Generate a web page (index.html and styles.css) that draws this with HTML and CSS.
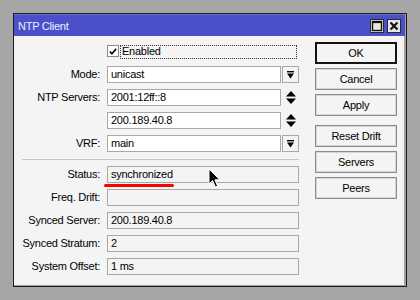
FILE: index.html
```html
<!DOCTYPE html>
<html lang="en">
<head>
  <meta charset="UTF-8">
  <title>NTP Client</title>
  <link rel="stylesheet" href="styles.css">
</head>
<body>
  <div class="window">
    <div class="titlebar">
      <span class="title">NTP Client</span>
      <div class="win-buttons">
        <span class="win-btn">
          <svg width="12" height="12" viewBox="0 0 12 12"><rect x="1.5" y="1.5" width="9" height="9" fill="none" stroke="#111" stroke-width="1.4"/><rect x="1.5" y="1.5" width="9" height="1.6" fill="#111"/></svg>
        </span>
        <span class="win-btn">
          <svg width="12" height="12" viewBox="0 0 12 12"><path d="M2.5 2.5 L9.5 9.5 M9.5 2.5 L2.5 9.5" stroke="#111" stroke-width="2.2"/></svg>
        </span>
      </div>
    </div>

    <div class="content">
      <div class="form">
        <span></span>
        <div class="check-row">
          <span class="checkbox">
            <svg width="11" height="11" viewBox="0 0 11 11"><path d="M2 5.5 L4.3 8 L9 2.5" fill="none" stroke="#000" stroke-width="1.8"/></svg>
          </span>
          <span class="check-label">Enabled</span>
        </div>

        <label>Mode:</label>
        <div class="field-row">
          <div class="field edit">unicast</div>
          <span class="drop-btn"><svg width="7" height="8" viewBox="0 0 7 8"><rect x="0" y="0" width="7" height="1.4" fill="#000"/><path d="M0 2.6 H7 L3.5 7.5 Z" fill="#000"/></svg></span>
        </div>

        <label>NTP Servers:</label>
        <div class="field-row">
          <div class="field edit">2001:12ff::8</div>
          <span class="spin"><svg width="10" height="13" viewBox="0 0 10 13"><path d="M5 0 L10 5.5 H0 Z M0 7.5 H10 L5 13 Z" fill="#000"/></svg></span>
        </div>

        <span></span>
        <div class="field-row">
          <div class="field edit">200.189.40.8</div>
          <span class="spin"><svg width="10" height="13" viewBox="0 0 10 13"><path d="M5 0 L10 5.5 H0 Z M0 7.5 H10 L5 13 Z" fill="#000"/></svg></span>
        </div>

        <label>VRF:</label>
        <div class="field-row">
          <div class="field edit">main</div>
          <span class="drop-btn"><svg width="7" height="8" viewBox="0 0 7 8"><rect x="0" y="0" width="7" height="1.4" fill="#000"/><path d="M0 2.6 H7 L3.5 7.5 Z" fill="#000"/></svg></span>
        </div>

        <div class="separator"></div>

        <label>Status:</label>
        <div class="field wide status">synchronized<span class="mark"></span></div>

        <label>Freq. Drift:</label>
        <div class="field wide"></div>

        <label>Synced Server:</label>
        <div class="field wide">200.189.40.8</div>

        <label>Synced Stratum:</label>
        <div class="field wide">2</div>

        <label>System Offset:</label>
        <div class="field wide">1 ms</div>
      </div>

      <div class="actions">
        <button class="btn default">OK</button>
        <button class="btn">Cancel</button>
        <button class="btn">Apply</button>
        <button class="btn spaced">Reset Drift</button>
        <button class="btn">Servers</button>
        <button class="btn">Peers</button>
      </div>
    </div>

    <!-- puntero del ratón sobre el campo Status -->
    <svg class="cursor" width="14" height="21" viewBox="0 0 14 21">
      <path d="M1 1 L1 16 L4.6 12.6 L7.4 19 L9.6 18 L6.9 11.8 L11.8 11.8 Z" fill="#000" stroke="#fff" stroke-width="1"/>
    </svg>
  </div>
</body>
</html>
```

FILE: styles.css
```css
body {
  margin: 0;
  padding: 13px 0 0 13px;
  background-color: #a6a6a6;
  font-family: "Liberation Sans", Arial, sans-serif;
  font-size: 11px;
  letter-spacing: -0.25px;
  color: #000;
}
.window {
  position: relative;
  width: 394px;
  height: 274px;
  box-sizing: border-box;
  border: 1px solid #1c1c1c;
  background-color: #f4f4f4;
  box-shadow: inset -2px -1px 0 #a0a0a0;
}
.titlebar {
  height: 22px;
  background-color: #4b4fc9;
  border-top: 1px solid #6a6ed8;
  box-sizing: border-box;
  display: flex;
  align-items: center;
  justify-content: space-between;
  padding: 0 4px 0 4px;
  margin-right: 1px;
}
.title {
  color: #eef0ff;
  font-size: 11px;
}
.win-buttons {
  display: flex;
  gap: 3px;
}
.win-btn {
  width: 14px;
  height: 14px;
  box-sizing: border-box;
  border: 1px solid #2a2a2a;
  background-color: #e6e6e6;
  display: flex;
  align-items: center;
  justify-content: center;
}
.content {
  display: flex;
  align-items: flex-start;
}
.form {
  display: grid;
  grid-template-columns: 86px 192px;
  column-gap: 7px;
  row-gap: 6px;
  padding-top: 9px;
  width: 286px;
}
.form label {
  text-align: right;
  line-height: 17px;
  white-space: nowrap;
}
.check-row {
  height: 15px;
  display: flex;
  align-items: flex-start;
}
.checkbox {
  width: 12px;
  height: 12px;
  box-sizing: border-box;
  border: 1px solid #8a8a8a;
  background-color: #fff;
  display: flex;
  align-items: center;
  justify-content: center;
}
.check-label {
  margin-left: 1px;
  height: 12px;
  line-height: 11px;
  flex: 1;
  border: 1px dotted #333;
  padding-left: 1px;
  margin-right: 2px;
}
.field-row {
  display: flex;
  gap: 1px;
}
.field {
  height: 17px;
  box-sizing: border-box;
  border: 1px solid #a8a8a8;
  line-height: 15px;
  padding-left: 3px;
  background-color: #f4f4f4;
}
.field-row .field {
  width: 174px;
}
.field.edit {
  background-color: #fff;
}
.field.wide {
  width: 192px;
}
.status {
  position: relative;
}
/* subrayado rojo de anotación */
.mark {
  position: absolute;
  left: -4px;
  top: 17px;
  width: 70px;
  height: 3px;
  border-radius: 2px;
  background-color: #f00;
}
.drop-btn {
  width: 17px;
  height: 17px;
  box-sizing: border-box;
  border: 1px solid #a8a8a8;
  background-color: #f4f4f4;
  display: flex;
  align-items: center;
  justify-content: center;
}
.spin {
  width: 17px;
  height: 17px;
  display: flex;
  align-items: center;
  justify-content: center;
}
.separator {
  grid-column: 1 / 3;
  height: 1px;
  margin: 1px 0 0 8px;
  background-color: #c6c6c6;
}
.actions {
  display: flex;
  flex-direction: column;
  gap: 4px;
  margin: 6px 0 0 15px;
}
.btn {
  width: 82px;
  height: 22px;
  box-sizing: border-box;
  border: 1px solid #8c8c8c;
  box-shadow: inset 0 0 0 1px #d6d6d6;
  background-color: #f4f4f4;
  font-family: "Liberation Sans", Arial, sans-serif;
  font-size: 11px;
  letter-spacing: -0.25px;
  color: #000;
  padding: 0;
}
.btn.default {
  border: 2px solid #141414;
  box-shadow: none;
}
.btn.spaced {
  margin-top: 5px;
}
.cursor {
  position: absolute;
  left: 194px;
  top: 154px;
}
```
